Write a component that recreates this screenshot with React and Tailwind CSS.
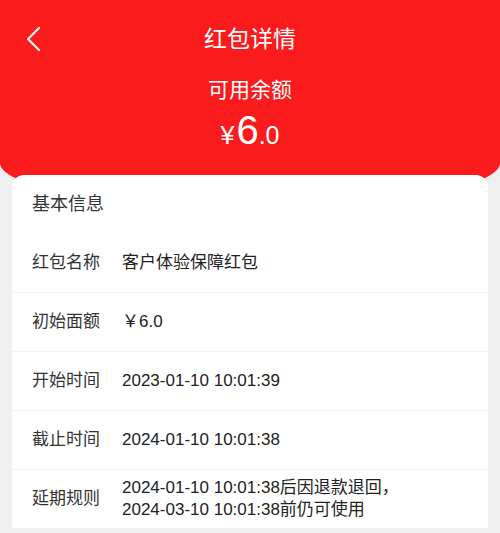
import React from "react";

const rows = [
  { label: "红包名称", value: ["客户体验保障红包"] },
  { label: "初始面额", value: ["￥6.0"] },
  { label: "开始时间", value: ["2023-01-10 10:01:39"] },
  { label: "截止时间", value: ["2024-01-10 10:01:38"] },
  {
    label: "延期规则",
    value: ["2024-01-10 10:01:38后因退款退回，", "2024-03-10 10:01:38前仍可使用"],
  },
];

export default function App() {
  return (
    <div
      className="w-[500px] h-[533px] overflow-hidden bg-[#efefef]"
      style={{ fontFamily: '"Liberation Sans", "Noto Sans CJK SC", sans-serif' }}
    >
      <div className="h-[207px] bg-[#fa1c1c] rounded-b-[250px_44px] text-white flex flex-col">
        <div className="h-[78px] flex items-center">
          <div className="w-[70px] flex items-center pl-[24px]">
            <svg width="20" height="28" viewBox="0 0 20 28" fill="none">
              <path d="M15 3 L4 14 L15 25" stroke="white" strokeWidth="2.2" strokeLinecap="round" strokeLinejoin="round" />
            </svg>
          </div>
          <div className="flex-1 text-center text-[23px] leading-[28px]">红包详情</div>
          <div className="w-[70px]" />
        </div>
        <div className="text-center text-[21px] leading-[24px]">可用余额</div>
        <div className="mt-[8px] flex justify-center items-baseline leading-[40px]">
          <span className="text-[25px] mr-[2px]">¥</span>
          <span className="text-[40px]">6</span>
          <span className="text-[25px]">.0</span>
        </div>
      </div>
      <div className="mx-[12px] -mt-[32px] relative rounded-t-[12px] bg-white">
        <div className="h-[59px] flex items-center px-[20px] text-[18px] text-[#333]">基本信息</div>
        {rows.map((r) => (
          <div
            key={r.label}
            className="h-[59px] flex items-center px-[20px] border-b border-[#f2f2f2]"
          >
            <div className="w-[90px] shrink-0 text-[17px] text-[#333]">{r.label}</div>
            <div className="text-[17px] leading-[22px] text-[#222]">
              {r.value.map((v) => (
                <div key={v}>{v}</div>
              ))}
            </div>
          </div>
        ))}
      </div>
    </div>
  );
}
